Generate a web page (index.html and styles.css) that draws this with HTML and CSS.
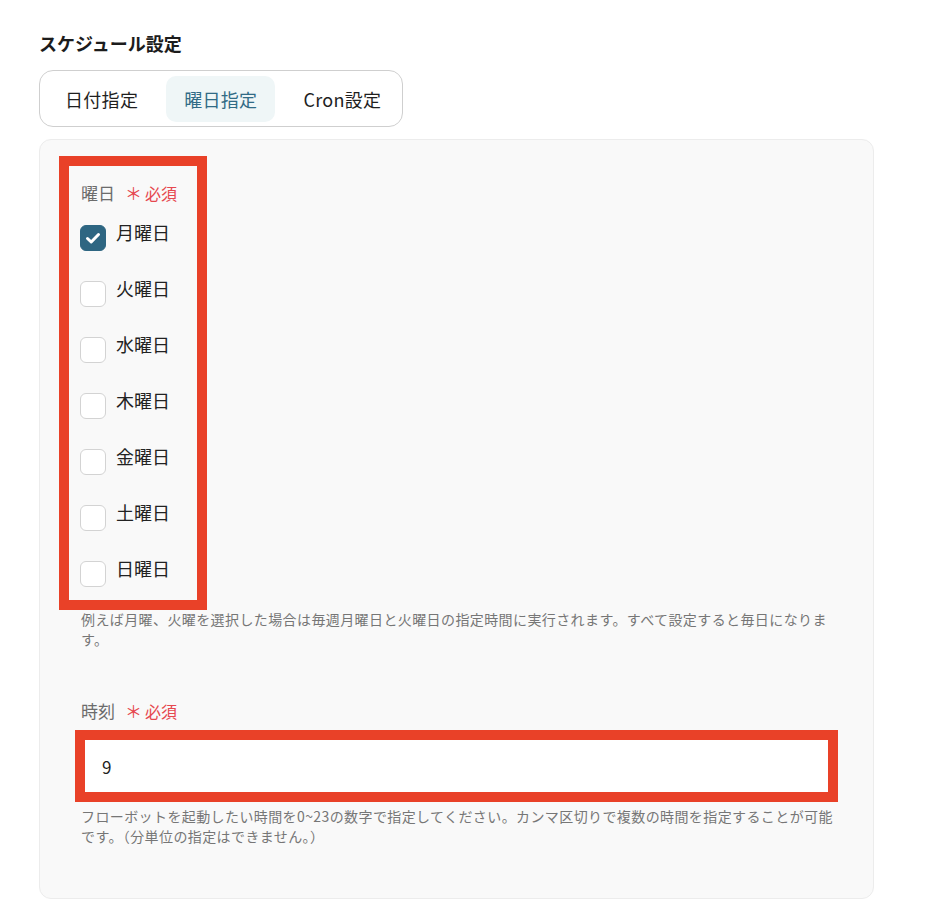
FILE: index.html
```html
<!DOCTYPE html>
<html lang="ja">
<head>
<meta charset="utf-8">
<title>スケジュール設定</title>
<link rel="stylesheet" href="styles.css">
</head>
<body>
<div class="page">
  <h2 class="title">スケジュール設定</h2>
  <div class="tabs">
    <button class="tab">日付指定</button>
    <button class="tab active">曜日指定</button>
    <button class="tab">Cron設定</button>
  </div>
  <div class="card">
    <div class="field">
      <div class="group mark-group">
        <div class="label">曜日<span class="req"><span class="ast">＊</span>必須</span></div>
        <ul class="days">
          <li class="day"><span class="box checked"><svg viewBox="0 0 26 26" width="26" height="26"><path d="M7.5 13.5 L11.2 17 L18.5 9.5" fill="none" stroke="#fff" stroke-width="3" stroke-linecap="round" stroke-linejoin="round"/></svg></span><span class="day-name">月曜日</span></li>
          <li class="day"><span class="box"></span><span class="day-name">火曜日</span></li>
          <li class="day"><span class="box"></span><span class="day-name">水曜日</span></li>
          <li class="day"><span class="box"></span><span class="day-name">木曜日</span></li>
          <li class="day"><span class="box"></span><span class="day-name">金曜日</span></li>
          <li class="day"><span class="box"></span><span class="day-name">土曜日</span></li>
          <li class="day"><span class="box"></span><span class="day-name">日曜日</span></li>
        </ul>
      </div>
      <p class="help help-days">例えば月曜、火曜を選択した場合は毎週月曜日と火曜日の指定時間に実行されます。すべて設定すると毎日になります。</p>
    </div>
    <div class="field field-time">
      <div class="label">時刻<span class="req"><span class="ast">＊</span>必須</span></div>
      <div class="input-wrap mark-input">
        <input class="text-input" type="text" value="9">
      </div>
      <p class="help help-time">フローボットを起動したい時間を0~23の数字で指定してください。カンマ区切りで複数の時間を指定することが可能です。（分単位の指定はできません。）</p>
    </div>
  </div>
</div>
</body>
</html>
```
FILE: styles.css
```css
*, *::before, *::after { box-sizing: border-box; }
html, body { margin: 0; padding: 0; background: #ffffff; }
body {
  font-family: "Noto Sans CJK JP", "Noto Sans", sans-serif;
  color: #222222;
}
.page {
  padding: 30px 0 0 39px;
  width: 926px;
}
.title {
  margin: 0;
  font-size: 18px;
  line-height: 26px;
  font-weight: 600;
  color: #1c1c1c;
}
.tabs {
  margin-top: 14px;
  display: inline-flex;
  gap: 10px;
  padding: 5px 3px 4px 7px;
  border: 1px solid #cfcfcf;
  border-radius: 14px;
  background: #fff;
}
.tab {
  height: 46px;
  padding: 0 18px;
  border: 0;
  border-radius: 10px;
  background: transparent;
  font-family: inherit;
  font-size: 18px;
  letter-spacing: 0.3px;
  color: #1f1f1f;
  cursor: pointer;
}
.tab.active {
  background: #eff6f7;
  color: #316b86;
}
.card {
  margin-top: 12px;
  width: 835px;
  border: 1px solid #ececec;
  border-radius: 12px;
  background: #f9f9f9;
  padding: 41px 41px 52px 41px;
}
.group { position: relative; }
.label {
  font-size: 17px;
  line-height: 24px;
  color: #6c6c6c;
  font-weight: 400;
}
.req {
  margin-left: 10px;
  font-size: 16px;
  font-weight: 400;
  color: #e6484f;
}
.ast {
  font-size: 17px;
  margin-right: 3px;
  font-weight: 400;
}
.days {
  list-style: none;
  margin: 15px 0 0 0;
  padding: 0;
  display: flex;
  flex-direction: column;
  gap: 25px;
}
.day {
  display: flex;
  align-items: flex-start;
  gap: 10px;
}
.box {
  margin-top: 5px;
  margin-left: -1px;
  width: 26px;
  height: 26px;
  border-radius: 6px;
  border: 1px solid #d3d3d3;
  background: #ffffff;
  display: block;
  flex: none;
}
.box.checked {
  border-color: #2e6682;
  background: #2e6682;
}
.box svg { display: block; margin: -1px; }
.day-name {
  font-size: 18px;
  line-height: 24px;
  color: #222;
}
.help {
  margin: 22px -4px 0 0;
  font-size: 14px;
  line-height: 20px;
  letter-spacing: 0.4px;
  color: #767676;
}
.help-time { margin-top: 10px; }
.field-time { margin-top: 50px; }
.input-wrap {
  position: relative;
  margin-top: 13px;
}
.text-input {
  display: block;
  width: 100%;
  height: 60px;
  padding: 0 20px;
  border: 1px solid #d9d9d9;
  border-radius: 6px;
  background: #fff;
  font-family: inherit;
  font-size: 17px;
  color: #1f1f1f;
  outline: none;
}
/* red annotation highlight boxes laid over the content */
.mark-group::after {
  content: "";
  position: absolute;
  left: -22px;
  top: -25px;
  bottom: -23px;
  width: 148px;
  border: 10px solid #e94128;
  pointer-events: none;
}
.mark-input::after {
  content: "";
  position: absolute;
  inset: -6px;
  border: 10px solid #e94128;
  pointer-events: none;
}
```
